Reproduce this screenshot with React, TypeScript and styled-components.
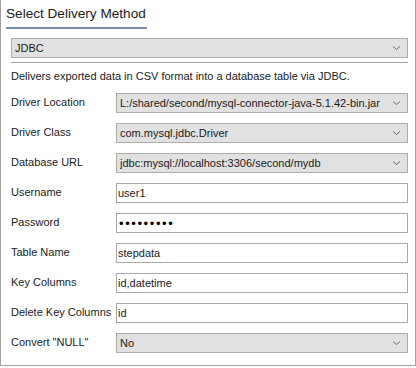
import { Fragment } from "react";
import styled, { createGlobalStyle } from "styled-components";

const GlobalStyle = createGlobalStyle`
  html, body {
    margin: 0;
    padding: 0;
    background: #ffffff;
  }

  body {
    font-family: "Liberation Sans", Arial, sans-serif;
    font-size: 11px;
    color: #1b1b1b;
  }
`;

const Panel = styled.div`
  box-sizing: border-box;
  width: 416px;
  height: 366px;
  border: 1px solid #a0a0a0;
  border-top: none;
  padding: 0 7px 0 5px;
  display: flex;
  flex-direction: column;
`;

const Title = styled.h2`
  align-self: flex-start;
  margin: 0;
  padding: 5px 1px 4px 0;
  font-size: 13.6px;
  font-weight: normal;
  line-height: 18px;
  border-bottom: 2px solid #7b8ca5;
`;

const Body = styled.div`
  padding-left: 5px;
  display: flex;
  flex-direction: column;
`;

const Select = styled.div<{ $mt?: number }>`
  box-sizing: border-box;
  height: 20px;
  min-width: 0;
  margin-top: ${(p) => p.$mt ?? 0}px;
  display: flex;
  align-items: center;
  gap: 6px;
  padding: 0 6px 0 3px;
  background: #e1e1e1;
  border: 1px solid #adadad;
  line-height: 14px;

  span {
    flex: 1;
    min-width: 0;
    white-space: nowrap;
    overflow: hidden;
  }
`;

const Input = styled.input`
  box-sizing: border-box;
  height: 20px;
  width: 100%;
  min-width: 0;
  margin: 0;
  padding: 0 1px;
  border: 1px solid #a9a9a9;
  background: #ffffff;
  font: inherit;
  color: inherit;
  outline: none;
`;

const PasswordInput = styled(Input)`
  padding-left: 2px;
  font-size: 13px;
  letter-spacing: 1.6px;
  color: #000000;
`;

const Separator = styled.hr`
  margin: 4px 0 0;
  border: none;
  border-top: 1px solid #a0a0a0;
`;

const Description = styled.p`
  margin: 6px 0 10px;
  line-height: 14px;
  white-space: nowrap;
`;

const Form = styled.div`
  display: grid;
  grid-template-columns: 105px minmax(0, 1fr);
  grid-auto-rows: 20px;
  row-gap: 10px;
`;

const Label = styled.label`
  padding-top: 2px;
  line-height: 14px;
  white-space: nowrap;
`;

function Chevron() {
  return (
    <svg width="9" height="6" viewBox="0 0 9 6" fill="none">
      <path d="M1 1.5 L4.5 4.5 L8 1.5" stroke="#6a6a6a" strokeWidth="1" />
    </svg>
  );
}

function Dropdown({ value, mt }: { value: string; mt?: number }) {
  return (
    <Select $mt={mt}>
      <span>{value}</span>
      <Chevron />
    </Select>
  );
}

const fields: { label: string; kind: "select" | "text" | "password"; value: string }[] = [
  { label: "Driver Location", kind: "select", value: "L:/shared/second/mysql-connector-java-5.1.42-bin.jar" },
  { label: "Driver Class", kind: "select", value: "com.mysql.jdbc.Driver" },
  { label: "Database URL", kind: "select", value: "jdbc:mysql://localhost:3306/second/mydb" },
  { label: "Username", kind: "text", value: "user1" },
  { label: "Password", kind: "password", value: "password1" },
  { label: "Table Name", kind: "text", value: "stepdata" },
  { label: "Key Columns", kind: "text", value: "id,datetime" },
  { label: "Delete Key Columns", kind: "text", value: "id" },
  { label: "Convert \"NULL\"", kind: "select", value: "No" },
];

export default function App() {
  return (
    <>
      <GlobalStyle />
      <Panel>
        <Title>Select Delivery Method</Title>
        <Body>
          <Dropdown value="JDBC" mt={9} />
          <Separator />
          <Description>
            Delivers exported data in CSV format into a database table via JDBC.
          </Description>
          <Form>
            {fields.map((f) => (
              <Fragment key={f.label}>
                <Label>{f.label}</Label>
                {f.kind === "select" ? (
                  <Dropdown value={f.value} />
                ) : f.kind === "password" ? (
                  <PasswordInput type="password" defaultValue={f.value} readOnly />
                ) : (
                  <Input type="text" defaultValue={f.value} readOnly />
                )}
              </Fragment>
            ))}
          </Form>
        </Body>
      </Panel>
    </>
  );
}
